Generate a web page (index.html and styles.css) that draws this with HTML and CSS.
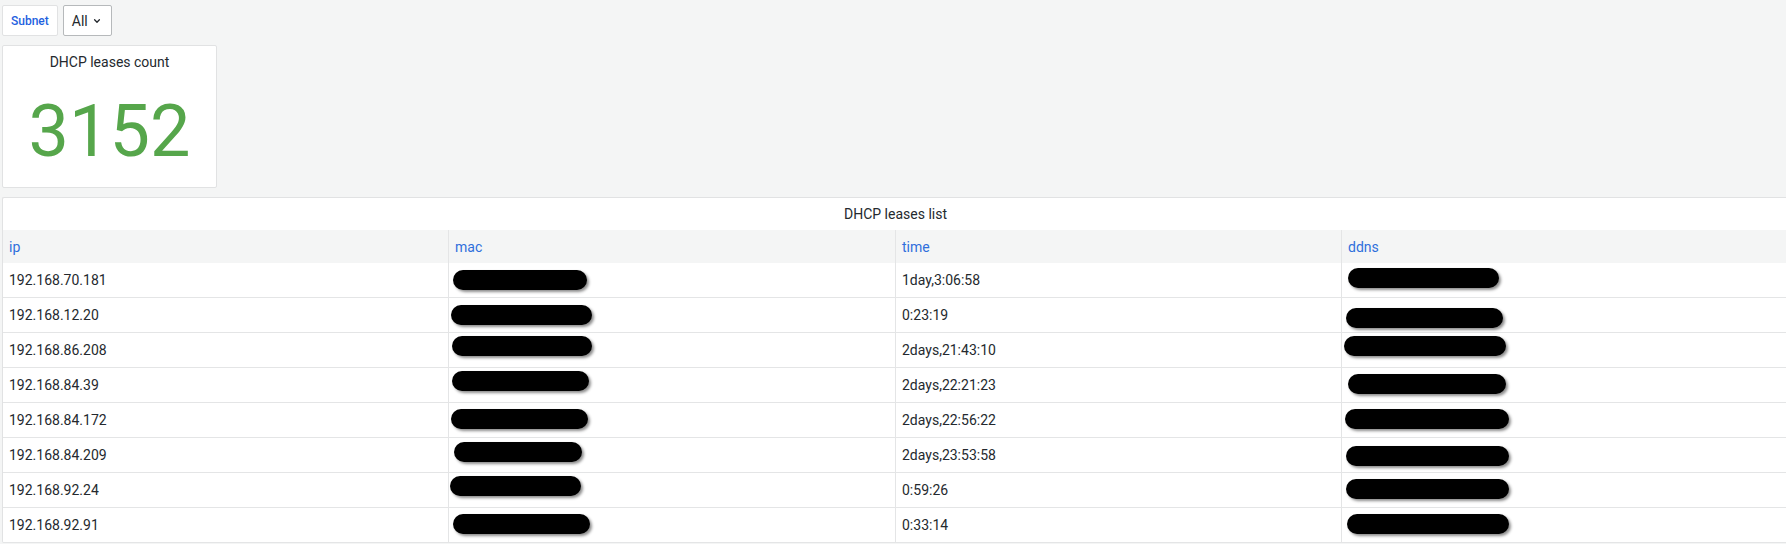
FILE: index.html
```html
<!DOCTYPE html>
<html>
<head>
<meta charset="utf-8">
<link rel="stylesheet" href="styles.css">
</head>
<body>
<div class="page">
  <div class="controls">
    <div class="var-label">Subnet</div>
    <div class="var-select">
      <span>All</span>
      <svg class="chev" width="12" height="12" viewBox="0 0 12 12"><path d="M3.6 4.8 L6 7.2 L8.4 4.8" fill="none" stroke="#24292e" stroke-width="1.3" stroke-linecap="round" stroke-linejoin="round"/></svg>
    </div>
  </div>

  <div class="panel stat-panel">
    <div class="panel-title">DHCP leases count</div>
    <div class="stat-body"><span class="stat-value">3152</span></div>
  </div>

  <div class="panel table-panel">
    <div class="panel-title">DHCP leases list</div>
    <table class="leases">
      <thead>
        <tr><th class="c1">ip</th><th class="c2">mac</th><th class="c3">time</th><th class="c4">ddns</th></tr>
      </thead>
      <tbody>
        <tr><td>192.168.70.181</td><td class="red"><i class="bar" style="left:4px;top:7px;width:134px"></i></td><td>1day,3:06:58</td><td class="red"><i class="bar" style="left:6px;top:5px;width:151px"></i></td></tr>
        <tr><td>192.168.12.20</td><td class="red"><i class="bar" style="left:2px;top:7px;width:141px"></i></td><td>0:23:19</td><td class="red"><i class="bar" style="left:4px;top:10px;width:157px"></i></td></tr>
        <tr><td>192.168.86.208</td><td class="red"><i class="bar" style="left:3px;top:3px;width:140px"></i></td><td>2days,21:43:10</td><td class="red"><i class="bar" style="left:2px;top:3px;width:162px"></i></td></tr>
        <tr><td>192.168.84.39</td><td class="red"><i class="bar" style="left:3px;top:3px;width:137px"></i></td><td>2days,22:21:23</td><td class="red"><i class="bar" style="left:6px;top:6px;width:158px"></i></td></tr>
        <tr><td>192.168.84.172</td><td class="red"><i class="bar" style="left:2px;top:6px;width:137px"></i></td><td>2days,22:56:22</td><td class="red"><i class="bar" style="left:3px;top:6px;width:164px"></i></td></tr>
        <tr><td>192.168.84.209</td><td class="red"><i class="bar" style="left:5px;top:4px;width:128px"></i></td><td>2days,23:53:58</td><td class="red"><i class="bar" style="left:4px;top:8px;width:163px"></i></td></tr>
        <tr><td>192.168.92.24</td><td class="red"><i class="bar" style="left:1px;top:3px;width:131px"></i></td><td>0:59:26</td><td class="red"><i class="bar" style="left:4px;top:6px;width:163px"></i></td></tr>
        <tr><td>192.168.92.91</td><td class="red"><i class="bar" style="left:4px;top:6px;width:137px"></i></td><td>0:33:14</td><td class="red"><i class="bar" style="left:5px;top:6px;width:162px"></i></td></tr>
      </tbody>
    </table>
  </div>
</div>
</body>
</html>
```
FILE: styles.css
```css
* { box-sizing: border-box; }

html, body {
  margin: 0;
  padding: 0;
  background: #f4f5f5;
  overflow: hidden;
}

body {
  font-family: Roboto, "Liberation Sans", sans-serif;
  color: #24292e;
  font-size: 14px;
}

.page {
  padding: 5px 0 0 2px;
  display: flex;
  flex-direction: column;
  align-items: flex-start;
  gap: 9px;
}

.controls {
  display: flex;
  gap: 5px;
  height: 31px;
}

.var-label {
  height: 31px;
  padding: 0 8px;
  background: #fff;
  border: 1px solid #e1e2e3;
  border-radius: 2px;
  color: #1f62e0;
  font-size: 12px;
  font-weight: 500;
  display: flex;
  align-items: center;
}

.var-select {
  height: 31px;
  width: 49px;
  padding: 0 0 0 8px;
  background: #fff;
  border: 1px solid #b6b9bb;
  border-radius: 2px;
  display: flex;
  align-items: center;
  gap: 3px;
  font-size: 14px;
  color: #24292e;
}

.chev { display: block; margin-top: 1px; }

.panel {
  background: #fff;
  border: 1px solid #e1e2e3;
  border-radius: 2px;
}

.panel-title {
  height: 32px;
  line-height: 32px;
  text-align: center;
  font-size: 14px;
  font-weight: 400;
  color: #24292e;
}

.stat-panel {
  width: 215px;
  height: 143px;
  display: flex;
  flex-direction: column;
}

.stat-body {
  flex: 1;
  display: flex;
  align-items: center;
  justify-content: center;
  padding-bottom: 2px;
}

.stat-value {
  color: #56a64b;
  font-size: 72px;
  line-height: 1;
  font-weight: 400;
}

.table-panel {
  width: 1786px;
  border-right: none;
  border-bottom: none;
}

.leases {
  width: 100%;
  table-layout: fixed;
  border-collapse: separate;
  border-spacing: 0;
}

.leases th, .leases td {
  text-align: left;
  padding: 0 0 0 6px;
  white-space: nowrap;
  overflow: visible;
  border-right: 1px solid #e4e5e6;
}

.leases th:last-child, .leases td:last-child { border-right: none; }

.leases th {
  background: #f4f5f5;
  height: 33px;
  font-weight: 400;
  color: #2f6fdc;
  font-size: 14px;
}

.leases th.c1 { width: 446px; }
.leases th.c2 { width: 447px; }
.leases th.c3 { width: 446px; }

.leases td {
  height: 35px;
  border-bottom: 1px solid #e4e5e6;
  color: #24292e;
  vertical-align: middle;
}

.leases td.red {
  position: relative;
  padding: 0;
}

.bar {
  position: absolute;
  display: block;
  height: 20px;
  background: #000;
  border-radius: 10px;
  box-shadow: 2px 2px 3px rgba(0, 0, 0, 0.45);
}
```
